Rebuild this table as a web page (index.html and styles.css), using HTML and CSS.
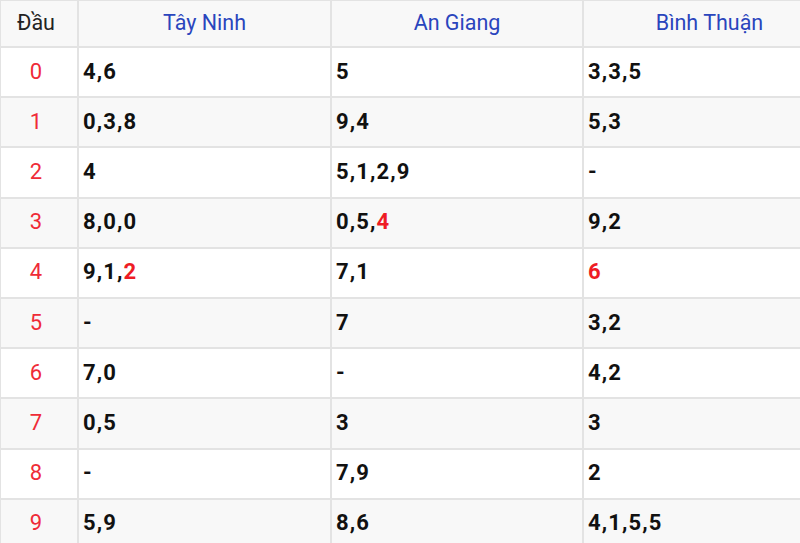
FILE: index.html
```html
<!DOCTYPE html>
<html>
<head>
<meta charset="utf-8">
<link rel="stylesheet" href="styles.css">
</head>
<body>
<table class="loto">
  <colgroup>
    <col class="c-dau"><col class="c-p1"><col class="c-p2"><col class="c-p3">
  </colgroup>
  <thead>
    <tr><th class="dau">Đầu</th><th>Tây Ninh</th><th>An Giang</th><th>Bình Thuận</th></tr>
  </thead>
  <tbody>
    <tr><td class="dau">0</td><td>4,6</td><td>5</td><td>3,3,5</td></tr>
    <tr><td class="dau">1</td><td>0,3,8</td><td>9,4</td><td>5,3</td></tr>
    <tr><td class="dau">2</td><td>4</td><td>5,1,2,9</td><td>-</td></tr>
    <tr><td class="dau">3</td><td>8,0,0</td><td>0,5,<span class="hl">4</span></td><td>9,2</td></tr>
    <tr><td class="dau">4</td><td>9,1,<span class="hl">2</span></td><td>7,1</td><td><span class="hl">6</span></td></tr>
    <tr><td class="dau">5</td><td>-</td><td>7</td><td>3,2</td></tr>
    <tr><td class="dau">6</td><td>7,0</td><td>-</td><td>4,2</td></tr>
    <tr><td class="dau">7</td><td>0,5</td><td>3</td><td>3</td></tr>
    <tr><td class="dau">8</td><td>-</td><td>7,9</td><td>2</td></tr>
    <tr><td class="dau">9</td><td>5,9</td><td>8,6</td><td>4,1,5,5</td></tr>
  </tbody>
</table>
</body>
</html>
```
FILE: styles.css
```css
html, body {
  margin: 0;
  padding: 0;
  background: #fff;
  overflow: hidden;
}
body {
  font-family: Roboto, "Liberation Sans", sans-serif;
}
.loto {
  border-collapse: collapse;
  table-layout: fixed;
  width: 836px;
  margin-top: -1px;
  margin-left: -1px;
}
.c-dau { width: 78px; }
.c-p1 { width: 253px; }
.c-p2 { width: 252px; }
.c-p3 { width: 253px; }
.loto th, .loto td {
  border: 2px solid #e3e3e3;
  height: 46.2px;
  padding: 0 0 2px 4px;
  vertical-align: middle;
  font-size: 22px;
}
.loto th {
  height: 42px;
  background: #f8f8f8;
  color: #2a45bd;
  font-weight: 400;
  font-size: 21.5px;
  text-align: center;
  padding: 0 0 3px 0;
}
.loto th.dau {
  color: #222;
  padding-right: 6px;
}
.loto td {
  font-weight: 700;
  color: #111;
  letter-spacing: 1.1px;
}
.loto td.dau {
  font-weight: 400;
  color: #ef2b37;
  text-align: center;
  letter-spacing: 0;
  padding: 0 6px 2px 0;
}
.loto tbody tr:nth-child(even) td {
  background: #f8f8f8;
}
.hl {
  color: #ee1c25;
}
```
